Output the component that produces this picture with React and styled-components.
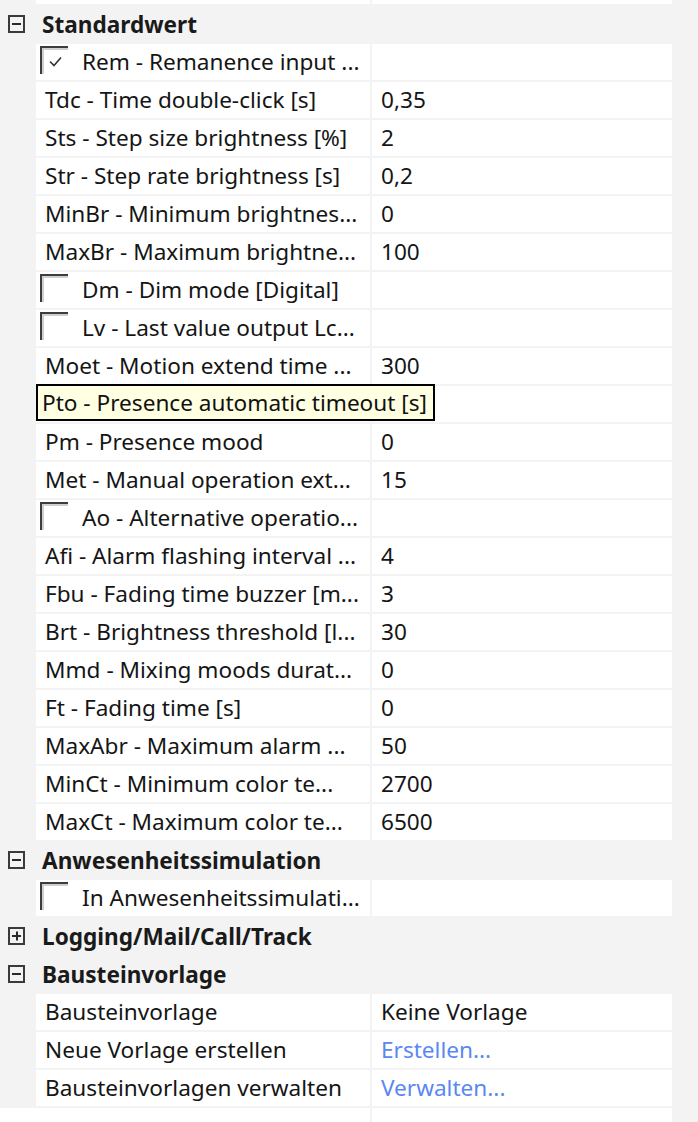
import styled, { createGlobalStyle } from 'styled-components';

const GlobalStyle = createGlobalStyle`
  *, *::before, *::after {
    box-sizing: border-box;
  }
  html, body {
    margin: 0;
    padding: 0;
    background: #f3f3f3;
    overflow: hidden;
  }
  body {
    font-family: "Noto Sans", "Open Sans", sans-serif;
    font-size: 22.6px;
    color: #111;
  }
`;

const Grid = styled.div`
  position: relative;
  width: 698px;
  height: 1154px;
  overflow: hidden;
  background: #f3f3f3;
  margin-top: -32px;
`;

const Row = styled.div`
  display: flex;
  height: 36px;
  margin-bottom: 2px;
`;

const Gutter = styled.div`
  width: 36px;
  flex-shrink: 0;
  background: ${props => props.open ? '#ffffff' : 'transparent'};
`;

const Cell = styled.div`
  display: flex;
  align-items: center;
  width: ${props => props.wide ? '334px' : '300px'};
  margin-right: ${props => props.wide ? '2px' : '0'};
  flex-shrink: 0;
  background: #ffffff;
  padding-left: ${props => props.indent ? '4px' : '9px'};
  padding-bottom: 1px;
  white-space: nowrap;
  overflow: hidden;
  color: ${props => props.link ? '#5a87f4' : '#151515'};
`;

const CategoryRow = styled.div`
  display: flex;
  align-items: center;
  height: 36px;
  margin-bottom: 2px;
`;

const Expander = styled.div`
  width: 17px;
  height: 18px;
  margin-left: 8px;
  border: 2px solid #3a3a3a;
  display: flex;
  align-items: center;
  justify-content: center;
  position: relative;
  flex-shrink: 0;

  &::before {
    content: '';
    width: 9px;
    height: 2px;
    background: #2a2a2a;
  }
  &::after {
    content: '';
    display: ${props => props.closed ? 'block' : 'none'};
    position: absolute;
    width: 2px;
    height: 9px;
    background: #2a2a2a;
    left: 50%;
    top: 50%;
    transform: translate(-50%, -50%);
  }
`;

const CategoryLabel = styled.div`
  margin-left: 17px;
  font-weight: 700;
  color: #1a1a1a;
`;

const Check = styled.span`
  display: inline-flex;
  align-items: center;
  justify-content: center;
  width: 28px;
  height: 28px;
  margin-right: 14px;
  border-top: 2px solid #3d3d3d;
  border-left: 2px solid #3d3d3d;
  box-shadow: inset 2px 2px 0 #d0d0d0;
  background: #fff;
  flex-shrink: 0;
  align-self: flex-start;
  margin-top: 2px;
`;

const Tooltip = styled.div`
  position: absolute;
  left: 36px;
  top: 416px;
  height: 37px;
  padding: 0 6px 1px 4px;
  display: flex;
  align-items: center;
  background: #ffffe1;
  border: 2px solid #000;
  color: #111;
  white-space: nowrap;
  z-index: 2;
`;

const CheckMark = () => (
  <svg width="13" height="11" viewBox="0 0 13 11">
    <path d="M1 5.5 L5 9.5 L12 1.5" fill="none" stroke="#333" strokeWidth="1.6" />
  </svg>
);

const Item = ({ name, value, check, checked, link, open }) => (
  <Row>
    <Gutter open={open} />
    <Cell wide indent={check}>
      {check && <Check>{checked && <CheckMark />}</Check>}
      {name}
    </Cell>
    <Cell link={link}>{value}</Cell>
  </Row>
);

const Category = ({ title, closed }) => (
  <CategoryRow>
    <Expander closed={closed} />
    <CategoryLabel>{title}</CategoryLabel>
  </CategoryRow>
);

// the Pto row is hidden below its tooltip, so its own cell stays empty
const standard = [
  { id: 'rem', name: 'Rem - Remanence input ...', check: true, checked: true },
  { id: 'tdc', name: 'Tdc - Time double-click [s]', value: '0,35' },
  { id: 'sts', name: 'Sts - Step size brightness [%]', value: '2' },
  { id: 'str', name: 'Str - Step rate brightness [s]', value: '0,2' },
  { id: 'minbr', name: 'MinBr - Minimum brightnes...', value: '0' },
  { id: 'maxbr', name: 'MaxBr - Maximum brightne...', value: '100' },
  { id: 'dm', name: 'Dm - Dim mode [Digital]', check: true },
  { id: 'lv', name: 'Lv - Last value output Lc...', check: true },
  { id: 'moet', name: 'Moet - Motion extend time ...', value: '300' },
  { id: 'pto', name: '', value: '' },
  { id: 'pm', name: 'Pm - Presence mood', value: '0' },
  { id: 'met', name: 'Met - Manual operation ext...', value: '15' },
  { id: 'ao', name: 'Ao - Alternative operatio...', check: true },
  { id: 'afi', name: 'Afi - Alarm flashing interval ...', value: '4' },
  { id: 'fbu', name: 'Fbu - Fading time buzzer [m...', value: '3' },
  { id: 'brt', name: 'Brt - Brightness threshold [l...', value: '30' },
  { id: 'mmd', name: 'Mmd - Mixing moods durat...', value: '0' },
  { id: 'ft', name: 'Ft - Fading time [s]', value: '0' },
  { id: 'maxabr', name: 'MaxAbr - Maximum alarm ...', value: '50' },
  { id: 'minct', name: 'MinCt - Minimum color te...', value: '2700' },
  { id: 'maxct', name: 'MaxCt - Maximum color te...', value: '6500' },
];

const App = () => {
  return (
    <>
      <GlobalStyle />
      <Grid>
        <Item name="" value="" />
        <Category title="Standardwert" />
        {standard.map(item => (
          <Item key={item.id} {...item} />
        ))}
        <Category title="Anwesenheitssimulation" />
        <Item name="In Anwesenheitssimulati..." check />
        <Category title="Logging/Mail/Call/Track" closed />
        <Category title="Bausteinvorlage" />
        <Item name="Bausteinvorlage" value="Keine Vorlage" />
        <Item name="Neue Vorlage erstellen" value="Erstellen..." link />
        <Item name="Bausteinvorlagen verwalten" value="Verwalten..." link />
        <Item name="" value="" open />
        <Tooltip>Pto - Presence automatic timeout [s]</Tooltip>
      </Grid>
    </>
  );
};

export default App;
